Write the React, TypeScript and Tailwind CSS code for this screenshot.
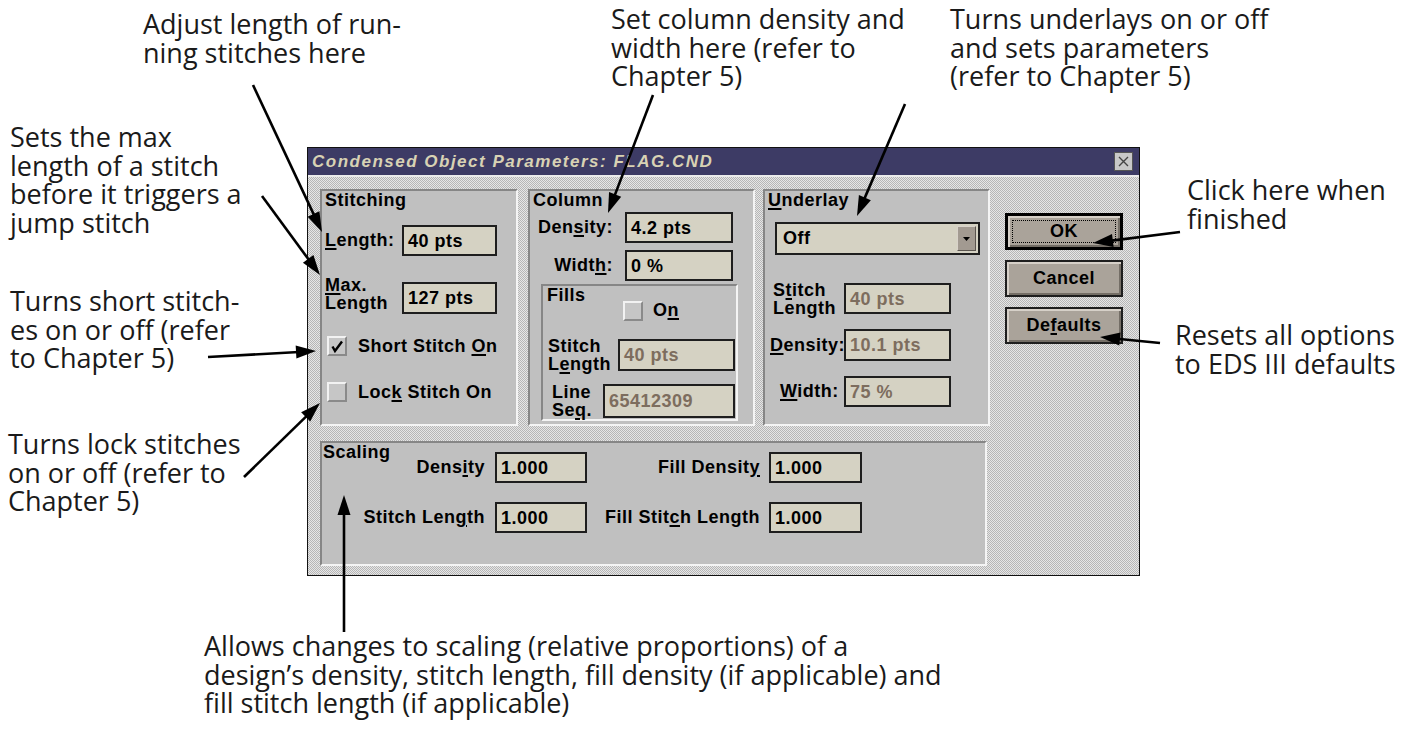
import React from "react";

const U = ({ children }: { children: React.ReactNode }) => (
  <span className="underline decoration-[1.5px] underline-offset-[2px]">{children}</span>
);

function Box({ className, children, dim }: { className: string; children: React.ReactNode; dim?: boolean }) {
  return (
    <div
      className={`flex shrink-0 items-center border-2 border-[#1e1e1e] bg-[#d5d2c3] pl-[4px] leading-none ${
        dim ? "text-[#7d6d5e]" : "text-black"
      } ${className}`}
    >
      {children}
    </div>
  );
}

function Check({ checked }: { checked?: boolean }) {
  return (
    <div className="flex h-[20px] w-[20px] shrink-0 items-center justify-center border-2 border-t-[#f2f2f2] border-l-[#f2f2f2] border-b-[#8a8a8a] border-r-[#8a8a8a] bg-[#c6c6c6]">
      {checked && (
        <svg width="14" height="14" viewBox="0 0 14 14">
          <path d="M2.5 7.5 L5 12 L12 2.5" stroke="#000" strokeWidth="2.4" fill="none" />
        </svg>
      )}
    </div>
  );
}

function Group({ className, children }: { className: string; children: React.ReactNode }) {
  return (
    <div
      className={`flex flex-col border-2 border-t-[#868686] border-l-[#868686] border-b-[#f4f4f4] border-r-[#f4f4f4] bg-[#c0c0c0] ${className}`}
    >
      {children}
    </div>
  );
}

function Button({ children, main }: { children: React.ReactNode; main?: boolean }) {
  if (main) {
    return (
      <div className="relative flex h-[37px] w-[118px] items-center justify-center border-[3px] border-black bg-[#aaa39a] shadow-[inset_2px_2px_0_#d6d0c8,inset_-2px_-2px_0_#746e66]">
        <div className="absolute inset-[4px] border border-dotted border-black" />
        <span>{children}</span>
      </div>
    );
  }
  return (
    <div className="flex h-[37px] w-[118px] items-center justify-center border-2 border-[#1e1e1e] bg-[#aaa39a] shadow-[inset_2px_2px_0_#d6d0c8,inset_-2px_-2px_0_#746e66]">
      <span>{children}</span>
    </div>
  );
}

function Arrow({ x1, y1, x2, y2 }: { x1: number; y1: number; x2: number; y2: number }) {
  const dx = x2 - x1;
  const dy = y2 - y1;
  const L = Math.hypot(dx, dy);
  const ux = dx / L;
  const uy = dy / L;
  const hl = 20;
  const hw = 6.5;
  const bx = x2 - ux * hl;
  const by = y2 - uy * hl;
  const p1 = `${bx - uy * hw},${by + ux * hw}`;
  const p2 = `${bx + uy * hw},${by - ux * hw}`;
  return (
    <g>
      <line x1={x1} y1={y1} x2={bx + ux * 3} y2={by + uy * 3} stroke="#000" strokeWidth={2.6} />
      <polygon points={`${x2},${y2} ${p1} ${p2}`} fill="#000" />
    </g>
  );
}

function Dialog() {
  return (
    <div className="flex h-[429px] w-[833px] flex-col border border-[#111] font-['Liberation_Sans',Arial,sans-serif] text-[18px] font-bold tracking-[0.5px] text-black">
      <div className="flex h-[27px] items-center justify-between bg-[#3d3b65] pl-[4px] pr-[6px]">
        <span className="text-[17px] font-bold italic tracking-[1.5px] text-[#d8d2b4]">
          Condensed Object Parameters: FLAG.CND
        </span>
        <div className="flex h-[19px] w-[19px] items-center justify-center border border-[#555] bg-[#c8c8c8]">
          <svg width="11" height="11" viewBox="0 0 11 11">
            <path d="M1 1 L10 10 M10 1 L1 10" stroke="#444" strokeWidth="1.4" />
          </svg>
        </div>
      </div>
      <div className="flex flex-1 border-t-2 border-[#ececec] bg-[#d0d0d0] bg-[image:repeating-conic-gradient(#b6b6b6_0_25%,#e6e6e6_0_50%)] bg-[length:2px_2px] pl-[12px] pt-[12px]">
        <div className="flex w-[670px] flex-col">
          <div className="flex h-[237px]">
            {/* Stitching */}
            <Group className="h-full w-[198px] pl-[3px]">
              <div className="mt-[1px] h-[17px] leading-[17px]">Stitching</div>
              <div className="mt-[16px] flex h-[31px] items-center">
                <span className="w-[77px]">
                  <U>L</U>ength:
                </span>
                <Box className="h-[31px] w-[95px]">40 pts</Box>
              </div>
              <div className="mt-[26px] flex h-[32px] items-start">
                <span className="-mt-[6px] w-[77px] leading-[18px]">
                  <U>M</U>ax.
                  <br />
                  Length
                </span>
                <Box className="h-[32px] w-[95px]">127 pts</Box>
              </div>
              <div className="ml-[2px] mt-[22px] flex h-[20px] items-center">
                <Check checked />
                <span className="ml-[11px]">
                  Short Stitch <U>O</U>n
                </span>
              </div>
              <div className="ml-[2px] mt-[26px] flex h-[20px] items-center">
                <Check />
                <span className="ml-[11px]">
                  Loc<U>k</U> Stitch On
                </span>
              </div>
            </Group>

            {/* Column */}
            <Group className="ml-[10px] h-full w-[227px]">
              <div className="ml-[3px] mt-[1px] h-[17px] leading-[17px]">Column</div>
              <div className="mt-[3px] flex h-[31px] items-center">
                <span className="w-[83px] text-right">
                  Den<U>s</U>ity:
                </span>
                <Box className="ml-[12px] h-[31px] w-[108px]">4.2 pts</Box>
              </div>
              <div className="mt-[7px] flex h-[31px] items-center">
                <span className="w-[83px] text-right">
                  Widt<U>h</U>:
                </span>
                <Box className="ml-[12px] h-[31px] w-[108px]">0 %</Box>
              </div>
              <div className="ml-[11px] mt-[3px] flex h-[137px] w-[197px] flex-col border-2 border-t-[#868686] border-l-[#868686] border-b-[#f4f4f4] border-r-[#f4f4f4]">
                <div className="flex items-start">
                  <span className="ml-[4px] mt-[1px] w-[76px] leading-[17px]">Fills</span>
                  <div className="mt-[11px] flex items-center">
                    <Check />
                    <span className="ml-[10px]">
                      O<U>n</U>
                    </span>
                  </div>
                </div>
                <div className="mt-[15px] flex h-[32px] items-center">
                  <span className="ml-[5px] w-[70px] leading-[18px]">
                    Stitch
                    <br />
                    L<U>e</U>ngth
                  </span>
                  <Box className="h-[32px] w-[117px]" dim>
                    40 pts
                  </Box>
                </div>
                <div className="mt-[13px] flex h-[34px] items-center">
                  <span className="ml-[9px] w-[51px] leading-[18px]">
                    Line
                    <br />
                    Se<U>q</U>.
                  </span>
                  <Box className="h-[34px] w-[132px]" dim>
                    65412309
                  </Box>
                </div>
              </div>
            </Group>

            {/* Underlay */}
            <Group className="ml-[8px] h-full w-[227px]">
              <div className="ml-[3px] mt-[1px] h-[17px] leading-[17px]">
                <U>U</U>nderlay
              </div>
              <div className="ml-[10px] mt-[13px] flex h-[33px] w-[205px] items-center justify-between border-2 border-[#1e1e1e] bg-[#d5d2c3] pl-[6px] pr-[2px]">
                <span>Off</span>
                <div className="flex h-[25px] w-[19px] items-center justify-center border border-t-[#d8d2ca] border-l-[#d8d2ca] border-b-[#5a544e] border-r-[#5a544e] bg-[#a29a91]">
                  <svg width="7" height="4" viewBox="0 0 7 4">
                    <path d="M0 0 H7 L3.5 4 Z" fill="#000" />
                  </svg>
                </div>
              </div>
              <div className="mt-[28px] flex h-[31px] items-center">
                <span className="ml-[8px] w-[71px] leading-[18px]">
                  S<U>t</U>itch
                  <br />
                  Length
                </span>
                <Box className="h-[31px] w-[107px]" dim>
                  40 pts
                </Box>
              </div>
              <div className="mt-[15px] flex h-[32px] items-center">
                <span className="ml-[5px] w-[74px]">
                  <U>D</U>ensity:
                </span>
                <Box className="h-[32px] w-[107px]" dim>
                  10.1 pts
                </Box>
              </div>
              <div className="mt-[15px] flex h-[31px] items-center">
                <span className="ml-[15px] w-[64px]">
                  <U>W</U>idth:
                </span>
                <Box className="h-[31px] w-[107px]" dim>
                  75 %
                </Box>
              </div>
            </Group>
          </div>

          {/* Scaling */}
          <Group className="mt-[15px] h-[125px] w-[667px]">
            <div className="ml-[1px] mt-[1px] h-[8px] leading-[17px]">Scaling</div>
            <div className="flex h-[31px] items-center">
              <span className="w-[163px] text-right">
                Dens<U>i</U>ty
              </span>
              <Box className="ml-[10px] h-[31px] w-[92px]">1.000</Box>
              <span className="w-[173px] text-right">
                Fill Densit<U>y</U>
              </span>
              <Box className="ml-[9px] h-[31px] w-[93px]">1.000</Box>
            </div>
            <div className="mt-[19px] flex h-[31px] items-center">
              <span className="w-[163px] text-right">
                Stitch Len<U>g</U>th
              </span>
              <Box className="ml-[10px] h-[31px] w-[92px]">1.000</Box>
              <span className="w-[173px] text-right">
                Fill Stit<U>c</U>h Length
              </span>
              <Box className="ml-[9px] h-[31px] w-[93px]">1.000</Box>
            </div>
          </Group>
        </div>

        {/* Buttons */}
        <div className="ml-[15px] mt-[24px] flex flex-col gap-[10px]">
          <Button main>OK</Button>
          <Button>Cancel</Button>
          <Button>
            De<U>f</U>aults
          </Button>
        </div>
      </div>
    </div>
  );
}

export default function App() {
  const note = "absolute font-['Open_Sans','Noto_Sans',sans-serif] text-[27px] leading-[28.5px] text-[#1a1a1a] whitespace-nowrap";
  return (
    <div className="relative h-[743px] w-[1413px] overflow-hidden bg-white">
      <div className="pl-[307px] pt-[147px]">
        <Dialog />
      </div>

      <div className={`${note} left-[143px] top-[10px]`}>
        Adjust length of run-
        <br />
        ning stitches here
      </div>
      <div className={`${note} left-[10px] top-[123px]`}>
        Sets the max
        <br />
        length of a stitch
        <br />
        before it triggers a
        <br />
        jump stitch
      </div>
      <div className={`${note} left-[10px] top-[287px]`}>
        Turns short stitch-
        <br />
        es on or off (refer
        <br />
        to Chapter 5)
      </div>
      <div className={`${note} left-[8px] top-[430px]`}>
        Turns lock stitches
        <br />
        on or off (refer to
        <br />
        Chapter 5)
      </div>
      <div className={`${note} left-[611px] top-[5px]`}>
        Set column density and
        <br />
        width here (refer to
        <br />
        Chapter 5)
      </div>
      <div className={`${note} left-[950px] top-[5px]`}>
        Turns underlays on or off
        <br />
        and sets parameters
        <br />
        (refer to Chapter 5)
      </div>
      <div className={`${note} left-[1187px] top-[176px]`}>
        Click here when
        <br />
        finished
      </div>
      <div className={`${note} left-[1175px] top-[321px]`}>
        Resets all options
        <br />
        to EDS III defaults
      </div>
      <div className={`${note} left-[204px] top-[632px]`}>
        Allows changes to scaling (relative proportions) of a
        <br />
        design’s density, stitch length, fill density (if applicable) and
        <br />
        fill stitch length (if applicable)
      </div>

      <svg className="pointer-events-none absolute left-0 top-0" width="1413" height="743">
        <Arrow x1={253} y1={85} x2={322} y2={232} />
        <Arrow x1={262} y1={196} x2={320} y2={275} />
        <Arrow x1={208} y1={357} x2={316} y2={351} />
        <Arrow x1={244} y1={477} x2={320} y2={403} />
        <Arrow x1={344} y1={632} x2={344} y2={495} />
        <Arrow x1={653} y1={95} x2={608} y2={213} />
        <Arrow x1={905} y1={104} x2={857} y2={216} />
        <Arrow x1={1180} y1={232} x2={1093} y2={243} />
        <Arrow x1={1160} y1={343} x2={1100} y2={337} />
      </svg>
    </div>
  );
}
